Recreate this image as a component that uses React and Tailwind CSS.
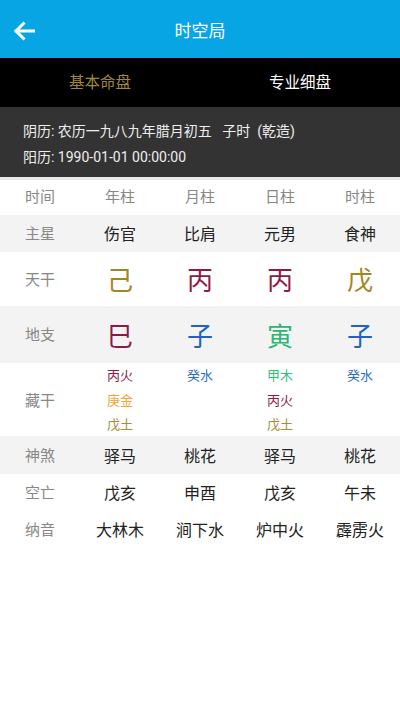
import React from "react";

const font = { fontFamily: '"Roboto", "Noto Sans CJK SC", sans-serif' };

const GOLD = "text-[#a3861f]";
const RED = "text-[#8c1a47]";
const BLUE = "text-[#1d63c9]";
const GREEN = "text-[#2bb673]";

function Row({ h, bg, label, pad = "pt-[2px]", children }) {
  return (
    <div className={`grid grid-cols-5 ${h} ${bg}`}>
      <div className={`flex items-center justify-center text-[15px] text-[#888] ${pad}`}>{label}</div>
      {children}
    </div>
  );
}

function Cell({ children, cls = "" }) {
  return <div className={`flex items-center justify-center ${cls}`}>{children}</div>;
}

export default function App() {
  const hidden = [
    [["丙火", "text-[#8c1a47]"], ["庚金", "text-[#f0a43a]"], ["戊土", "text-[#a88b35]"]],
    [["癸水", "text-[#2a6fc4]"]],
    [["甲木", "text-[#33bf79]"], ["丙火", "text-[#8c1a47]"], ["戊土", "text-[#a88b35]"]],
    [["癸水", "text-[#2a6fc4]"]],
  ];
  return (
    <div className="w-[400px] min-h-[711px] bg-white" style={font}>
      <div className="relative h-[58px] bg-[#08a5e4] flex items-center justify-center pt-[5px]">
        <svg className="absolute left-[13px] top-[21px]" width="22" height="20" viewBox="0 0 22 20">
          <path d="M20.5 10H3M10.5 2.5L3 10l7.5 7.5" fill="none" stroke="white" strokeWidth="3" strokeLinecap="square" />
        </svg>
        <span className="text-[17px] text-white">时空局</span>
      </div>
      <div className="grid grid-cols-2 h-[49px] bg-black text-[15.5px] pt-[3px]">
        <div className="flex items-center justify-center text-[#a3873a]">基本命盘</div>
        <div className="flex items-center justify-center text-white">专业细盘</div>
      </div>
      <div className="h-[70px] bg-[#333333] px-[23px] pt-[11px] text-[14px] text-[#eeeeee] leading-[26px]">
        <div className="whitespace-pre">阴历: 农历一九八九年腊月初五   子时  (乾造)</div>
        <div>阳历: 1990-01-01 00:00:00</div>
      </div>
      <div className="h-[3px] bg-[#e8e8e8]" />
      <Row h="h-[35px]" bg="bg-white" label="时间" pad="">
        {["年柱", "月柱", "日柱", "时柱"].map((t) => (
          <Cell key={t} cls="text-[15px] text-[#888]">{t}</Cell>
        ))}
      </Row>
      <Row h="h-[37px]" bg="bg-[#f3f3f3]" label="主星">
        {["伤官", "比肩", "元男", "食神"].map((t) => (
          <Cell key={t} cls="text-[16px] text-[#222] pt-[2px]">{t}</Cell>
        ))}
      </Row>
      <Row h="h-[54px]" bg="bg-white" label="天干">
        <Cell cls={`text-[26px] pt-[5px] ${GOLD}`}>己</Cell>
        <Cell cls={`text-[26px] pt-[5px] ${RED}`}>丙</Cell>
        <Cell cls={`text-[26px] pt-[5px] ${RED}`}>丙</Cell>
        <Cell cls={`text-[26px] pt-[5px] ${GOLD}`}>戊</Cell>
      </Row>
      <Row h="h-[57px]" bg="bg-[#f3f3f3]" label="地支">
        <Cell cls={`text-[26px] pt-[5px] ${RED}`}>巳</Cell>
        <Cell cls={`text-[26px] pt-[5px] ${BLUE}`}>子</Cell>
        <Cell cls={`text-[26px] pt-[5px] ${GREEN}`}>寅</Cell>
        <Cell cls={`text-[26px] pt-[5px] ${BLUE}`}>子</Cell>
      </Row>
      <Row h="h-[73px]" bg="bg-white" label="藏干">
        {hidden.map((col, i) => (
          <div key={i} className="flex flex-col items-center pt-[1px] text-[13px] leading-[24.5px]">
            {col.map(([t, c], j) => (
              <span key={j} className={c}>{t}</span>
            ))}
          </div>
        ))}
      </Row>
      <Row h="h-[38px]" bg="bg-[#f3f3f3]" label="神煞">
        {["驿马", "桃花", "驿马", "桃花"].map((t, i) => (
          <Cell key={i} cls="text-[16px] text-[#222] pt-[3px]">{t}</Cell>
        ))}
      </Row>
      <Row h="h-[36px]" bg="bg-white" label="空亡">
        {["戊亥", "申酉", "戊亥", "午未"].map((t, i) => (
          <Cell key={i} cls="text-[16px] text-[#222] pt-[3px]">{t}</Cell>
        ))}
      </Row>
      <Row h="h-[38px]" bg="bg-white" label="纳音">
        {["大林木", "涧下水", "炉中火", "霹雳火"].map((t, i) => (
          <Cell key={i} cls="text-[16px] text-[#222] pt-[3px]">{t}</Cell>
        ))}
      </Row>
    </div>
  );
}
